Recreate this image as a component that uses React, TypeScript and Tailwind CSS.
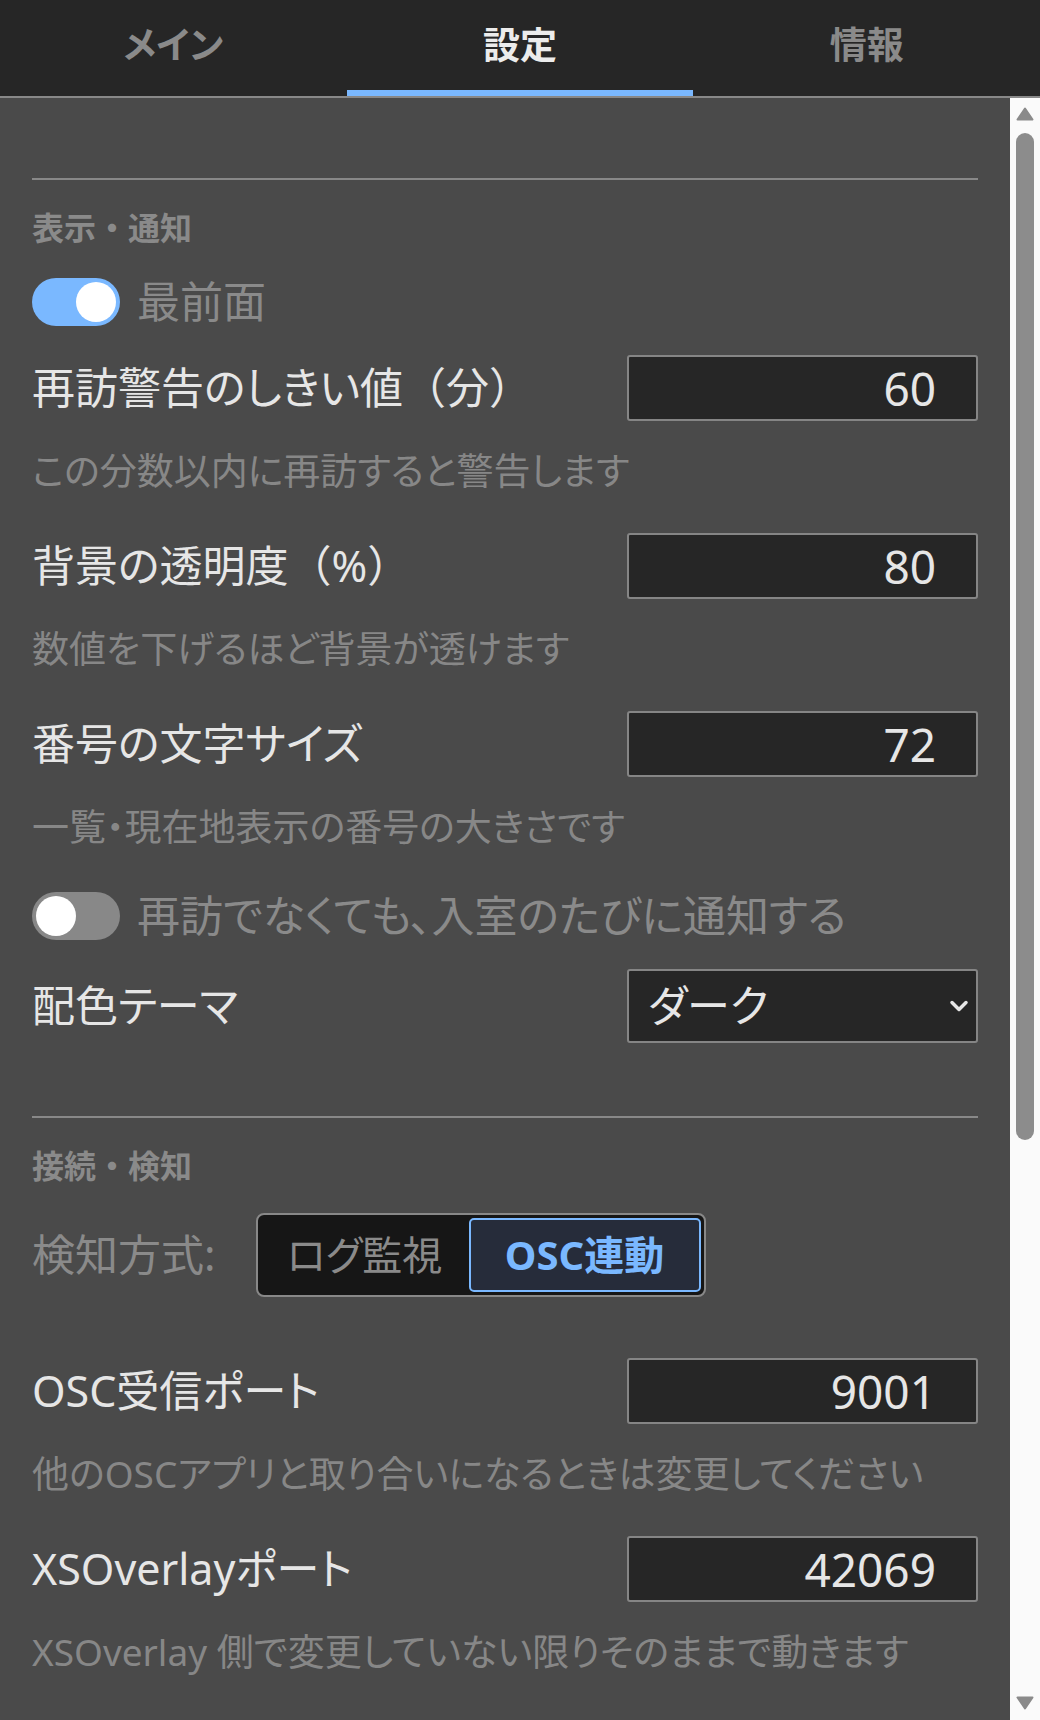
import React from "react"

const tabs = [
  { label: "メイン", active: false },
  { label: "設定", active: true },
  { label: "情報", active: false },
]

function Toggle({ on }: { on: boolean }) {
  return (
    <div
      className={`w-[88px] h-[48px] rounded-full flex items-center px-[4px] shrink-0 ${
        on ? "bg-[#7ab8ff] justify-end" : "bg-[#888888] justify-start"
      }`}
    >
      <div className="w-[40px] h-[40px] rounded-full bg-white" />
    </div>
  )
}

function NumberRow({ label, unit, value }: { label: string; unit?: string; value: string }) {
  return (
    <div className="flex items-center justify-between h-[66px]">
      <span className="text-[43px] text-[#e6e6e6] whitespace-nowrap">
        {label}
        {unit && <span className="[font-feature-settings:normal]">{unit}</span>}
      </span>
      <input
        type="text"
        inputMode="numeric"
        defaultValue={value}
        className="w-[351px] h-[66px] bg-[#262626] border-2 border-[#858585] rounded-[3px] text-right pr-[40px] text-[46px] text-[#e6e6e6] outline-none"
      />
    </div>
  )
}

function Hint({ children }: { children: React.ReactNode }) {
  return <p className="mt-[20px] text-[37px] leading-[60px] text-[#878787] whitespace-nowrap">{children}</p>
}

function SectionTitle({ children }: { children: React.ReactNode }) {
  return (
    <h2 className="text-[32px] leading-[48px] font-bold text-[#8a8a8a] [font-feature-settings:normal]">{children}</h2>
  )
}

export default function App() {
  return (
    <div className="w-[1040px] h-[1720px] flex flex-col bg-[#4a4a4a] overflow-hidden font-['Noto_Sans','Noto_Sans_CJK_JP',sans-serif] [font-feature-settings:'palt']">
      {/* tabs */}
      <nav className="flex h-[98px] bg-[#262626] border-b-2 border-[#888888] shrink-0">
        {tabs.map((tab) => (
          <div
            key={tab.label}
            className={`flex-1 flex items-center justify-center border-b-[6px] text-[37px] font-bold ${
              tab.active ? "border-[#7ab8ff] text-[#ececec]" : "border-transparent text-[#8a8a8a]"
            }`}
          >
            {tab.label}
          </div>
        ))}
      </nav>

      <div className="flex flex-1 min-h-0">
        <main className="flex-1 px-[32px] pt-[80px] overflow-hidden">
          {/* 表示・通知 */}
          <section className="border-t-2 border-[#888888] pt-[24px]">
            <SectionTitle>表示・通知</SectionTitle>

            <div className="mt-[26px] flex items-center gap-[17px] h-[48px]">
              <Toggle on />
              <span className="text-[43px] text-[#8a8a8a]">最前面</span>
            </div>

            <div className="mt-[29px]">
              <NumberRow label="再訪警告のしきい値" unit="（分）" value="60" />
              <Hint>この分数以内に再訪すると警告します</Hint>
            </div>

            <div className="mt-[32px]">
              <NumberRow label="背景の透明度" unit="（%）" value="80" />
              <Hint>数値を下げるほど背景が透けます</Hint>
            </div>

            <div className="mt-[32px]">
              <NumberRow label="番号の文字サイズ" value="72" />
              <Hint>一覧・現在地表示の番号の大きさです</Hint>
            </div>

            <div className="mt-[35px] flex items-center gap-[17px] h-[48px]">
              <Toggle on={false} />
              <span className="text-[43px] text-[#8a8a8a] whitespace-nowrap">再訪でなくても、入室のたびに通知する</span>
            </div>

            <div className="mt-[29px] flex items-center justify-between h-[74px]">
              <span className="text-[43px] text-[#e6e6e6]">配色テーマ</span>
              <div className="w-[351px] h-[74px] bg-[#262626] border-2 border-[#858585] rounded-[3px] flex items-center justify-between pl-[19px] pr-[7px]">
                <span className="text-[43px] text-[#e6e6e6]">ダーク</span>
                <svg width="20" height="14" viewBox="0 0 20 14" fill="none">
                  <path d="M3 3.5 L10 10.5 L17 3.5" stroke="#e6e6e6" strokeWidth="3.5" strokeLinecap="round" strokeLinejoin="round" />
                </svg>
              </div>
            </div>
          </section>

          {/* 接続・検知 */}
          <section className="mt-[73px] border-t-2 border-[#888888] pt-[24px]">
            <SectionTitle>接続・検知</SectionTitle>

            <div className="mt-[23px] flex items-center gap-[40px]">
              <span className="text-[43px] text-[#8a8a8a] whitespace-nowrap">検知方式:</span>
              <div className="h-[84px] w-[450px] border-2 border-[#888888] rounded-[8px] bg-[#161616] p-[3px] flex">
                <button className="w-[208px] h-full flex items-center justify-center text-[40px] text-[#8a8a8a]">
                  ログ監視
                </button>
                <button className="w-[232px] h-full flex items-center justify-center rounded-[5px] border-2 border-[#7ab8ff] bg-[#262c3a] text-[40px] font-bold text-[#7ab8ff]">
                  OSC連動
                </button>
              </div>
            </div>

            <div className="mt-[61px]">
              <NumberRow label="OSC受信ポート" value="9001" />
              <Hint>他のOSCアプリと取り合いになるときは変更してください</Hint>
            </div>

            <div className="mt-[32px]">
              <NumberRow label="XSOverlayポート" value="42069" />
              <Hint>XSOverlay 側で変更していない限りそのままで動きます</Hint>
            </div>
          </section>
        </main>

        {/* scrollbar */}
        <div className="w-[30px] bg-[#fafafa] flex flex-col items-center shrink-0">
          <svg className="mt-[9px]" width="18" height="14" viewBox="0 0 18 14">
            <path d="M9 1.5 L16.5 12.5 L1.5 12.5 Z" fill="#8a8a8a" stroke="#8a8a8a" strokeWidth="2" strokeLinejoin="round" />
          </svg>
          <div className="mt-[12px] w-[18px] h-[1007px] rounded-full bg-[#8c8c8c]" />
          <div className="flex-1" />
          <svg className="mb-[10px]" width="18" height="14" viewBox="0 0 18 14">
            <path d="M1.5 1.5 L16.5 1.5 L9 12.5 Z" fill="#8a8a8a" stroke="#8a8a8a" strokeWidth="2" strokeLinejoin="round" />
          </svg>
        </div>
      </div>
    </div>
  )
}
